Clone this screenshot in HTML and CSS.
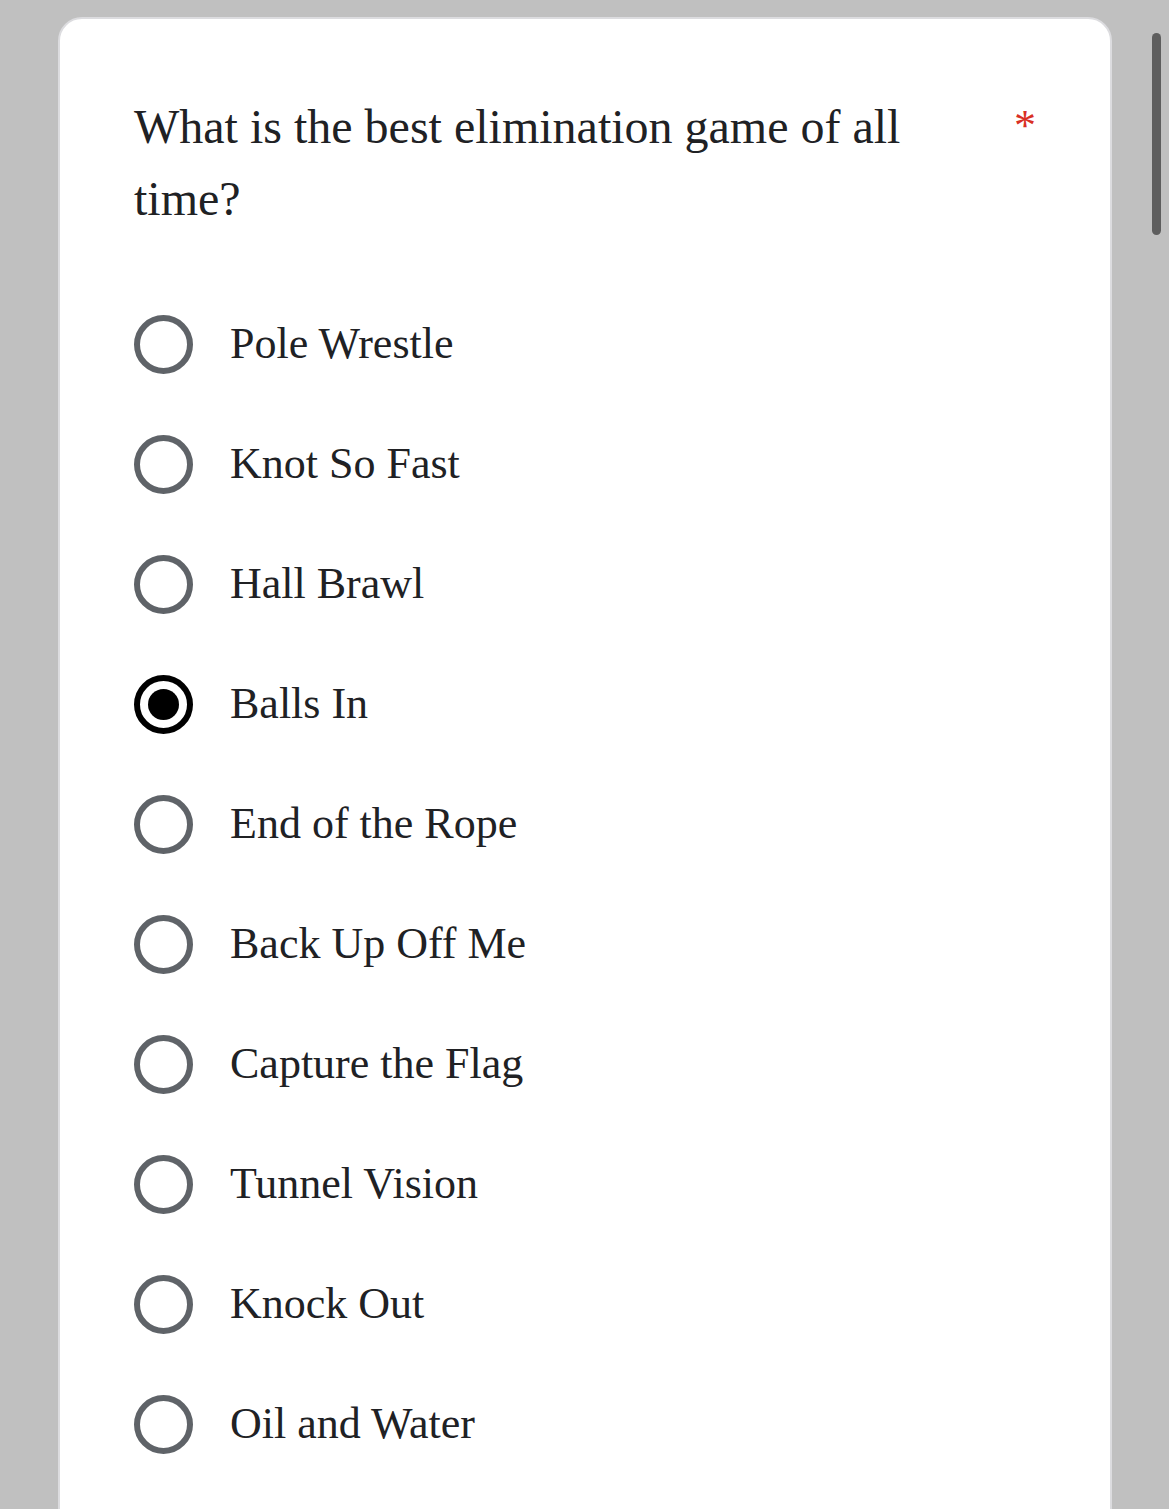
FILE: index.html
```html
<!DOCTYPE html>
<html lang="en">
<head>
    <meta charset="UTF-8">
    <meta name="viewport" content="width=device-width, initial-scale=1.0">
    <title>Elimination Game Poll</title>
    <link rel="stylesheet" href="styles.css">
</head>
<body>
    <div class="form-card">
        <div class="question-header">
            <div class="question-title">What is the best elimination game of all time?</div>
            <span class="required-mark">*</span>
        </div>

        <!-- Answer options -->
        <div class="option-list">
            <label class="option"><span class="radio"></span><span class="option-label">Pole Wrestle</span></label>
            <label class="option"><span class="radio"></span><span class="option-label">Knot So Fast</span></label>
            <label class="option"><span class="radio"></span><span class="option-label">Hall Brawl</span></label>
            <label class="option"><span class="radio checked"></span><span class="option-label">Balls In</span></label>
            <label class="option"><span class="radio"></span><span class="option-label">End of the Rope</span></label>
            <label class="option"><span class="radio"></span><span class="option-label">Back Up Off Me</span></label>
            <label class="option"><span class="radio"></span><span class="option-label">Capture the Flag</span></label>
            <label class="option"><span class="radio"></span><span class="option-label">Tunnel Vision</span></label>
            <label class="option"><span class="radio"></span><span class="option-label">Knock Out</span></label>
            <label class="option"><span class="radio"></span><span class="option-label">Oil and Water</span></label>
        </div>
    </div>

    <div class="scroll-thumb"></div>
</body>
</html>
```

FILE: styles.css
```css
/* Poll card styles */
body {
    margin: 0;
    background-color: #c0c0c0;
    font-family: "Liberation Serif", "Times New Roman", serif;
    color: #202124;
}

.form-card {
    margin: 17px 0 0 58px;
    width: 1054px;
    box-sizing: border-box;
    background-color: #fff;
    border: 2px solid #dcdcdf;
    border-radius: 24px;
    padding: 72px 74px 100px 74px;
}

.question-header {
    display: flex;
    justify-content: space-between;
    align-items: flex-start;
}

.question-title {
    width: 830px;
    font-size: 48px;
    line-height: 72px;
}

.required-mark {
    color: #d93025;
    font-size: 44px;
    line-height: 70px;
}

.option-list {
    margin-top: 49px;
    display: flex;
    flex-direction: column;
}

.option {
    height: 120px;
    display: flex;
    align-items: center;
    gap: 37px;
    cursor: pointer;
}

.radio {
    width: 59px;
    height: 59px;
    box-sizing: border-box;
    border: 6px solid #5f6368;
    border-radius: 50%;
    display: flex;
    justify-content: center;
    align-items: center;
    flex-shrink: 0;
}

.radio.checked {
    border-color: #000;
}

.radio.checked::after {
    content: "";
    width: 31px;
    height: 31px;
    border-radius: 50%;
    background-color: #000;
}

.option-label {
    font-size: 44px;
    line-height: 48px;
}

.scroll-thumb {
    position: fixed;
    top: 33px;
    right: 8px;
    width: 9px;
    height: 202px;
    border-radius: 5px;
    background-color: #5e5e5e;
}
```
